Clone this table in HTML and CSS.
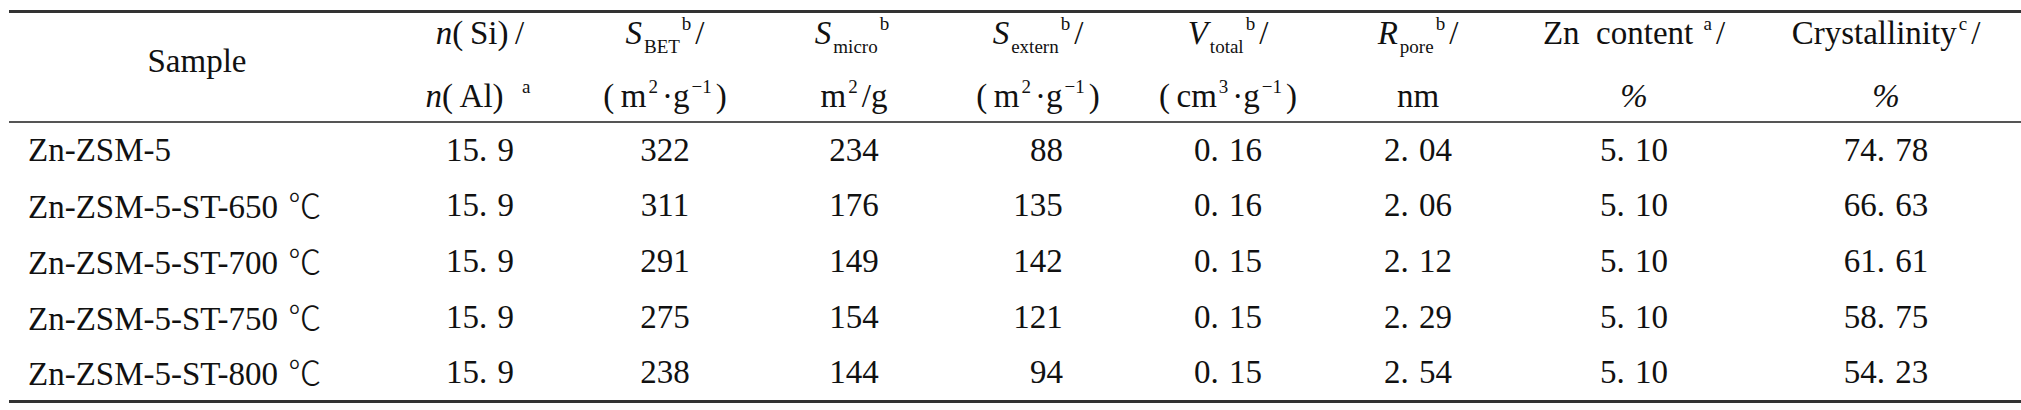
FILE: index.html
```html
<!DOCTYPE html>
<html lang="en">
<head>
    <meta charset="UTF-8">
    <title>Zn-ZSM-5 textural properties</title>
    <link rel="stylesheet" href="styles.css">
</head>
<body>
    <table class="props">
        <colgroup>
            <col class="col_sample">
            <col class="col_ratio">
            <col class="col_bet">
            <col class="col_micro">
            <col class="col_extern">
            <col class="col_total">
            <col class="col_pore">
            <col class="col_zn">
            <col class="col_cryst">
        </colgroup>
        <thead>
            <tr class="head_top">
                <th rowspan="2" class="sample_head">Sample</th>
                <th><i>n</i>(&thinsp;Si)&thinsp;/</th>
                <th><i>S</i><sub>BET</sub><sup>b</sup>/</th>
                <th><i>S</i><sub>micro</sub><sup>b</sup></th>
                <th><i>S</i><sub>extern</sub><sup>b</sup>/</th>
                <th><i>V</i><sub>total</sub><sup>b</sup>/</th>
                <th><i>R</i><sub>pore</sub><sup>b</sup>/</th>
                <th>Zn&nbsp; content <sup>a</sup>/</th>
                <th>Crystallinity<sup>c</sup>/</th>
            </tr>
            <tr class="head_unit">
                <th><i>n</i>(&thinsp;Al)&ensp;<sup>a</sup></th>
                <th>(&thinsp;m<sup>2</sup>&middot;g<sup>&minus;1</sup>)</th>
                <th>m<sup>2</sup>/g</th>
                <th>(&thinsp;m<sup>2</sup>&middot;g<sup>&minus;1</sup>)</th>
                <th>(&thinsp;cm<sup>3</sup>&middot;g<sup>&minus;1</sup>)</th>
                <th>nm</th>
                <th><i>%</i></th>
                <th><i>%</i></th>
            </tr>
        </thead>
        <tbody>
            <tr>
                <td>Zn-ZSM-5</td>
                <td>15. 9</td>
                <td>322</td>
                <td>234</td>
                <td><span class="short">88</span></td>
                <td>0. 16</td>
                <td>2. 04</td>
                <td>5. 10</td>
                <td>74. 78</td>
            </tr>
            <tr>
                <td>Zn-ZSM-5-ST-650 <span class="deg">℃</span></td>
                <td>15. 9</td>
                <td>311</td>
                <td>176</td>
                <td>135</td>
                <td>0. 16</td>
                <td>2. 06</td>
                <td>5. 10</td>
                <td>66. 63</td>
            </tr>
            <tr>
                <td>Zn-ZSM-5-ST-700 <span class="deg">℃</span></td>
                <td>15. 9</td>
                <td>291</td>
                <td>149</td>
                <td>142</td>
                <td>0. 15</td>
                <td>2. 12</td>
                <td>5. 10</td>
                <td>61. 61</td>
            </tr>
            <tr>
                <td>Zn-ZSM-5-ST-750 <span class="deg">℃</span></td>
                <td>15. 9</td>
                <td>275</td>
                <td>154</td>
                <td>121</td>
                <td>0. 15</td>
                <td>2. 29</td>
                <td>5. 10</td>
                <td>58. 75</td>
            </tr>
            <tr>
                <td>Zn-ZSM-5-ST-800 <span class="deg">℃</span></td>
                <td>15. 9</td>
                <td>238</td>
                <td>144</td>
                <td><span class="short">94</span></td>
                <td>0. 15</td>
                <td>2. 54</td>
                <td>5. 10</td>
                <td>54. 23</td>
            </tr>
        </tbody>
    </table>
</body>
</html>
```

FILE: styles.css
```css
*{
    box-sizing: border-box;
    margin: 0;
    padding: 0;
}

body{
    background-color: #fff;
    color: #111;
    font-family: "Liberation Serif", serif;
    font-size: 33px;
}

.props{
    border-collapse: collapse;
    table-layout: fixed;
    width: 2012px;
    margin: 10px 0 0 9px;
    font-family: "Liberation Serif", serif;
}

.col_sample{ width: 376px; }
.col_ratio{ width: 190px; }
.col_bet{ width: 180px; }
.col_micro{ width: 198px; }
.col_extern{ width: 170px; }
.col_total{ width: 210px; }
.col_pore{ width: 170px; }
.col_zn{ width: 262px; }
.col_cryst{ width: 256px; }

.props thead{
    border-top: 3px solid #333;
    border-bottom: 2px solid #555;
}

.props tbody{
    border-bottom: 3px solid #333;
}

.props th{
    font-weight: normal;
    text-align: center;
    white-space: nowrap;
    line-height: 1;
}

.props .head_top th{
    height: 52px;
    padding-bottom: 10px;
}

.props .head_unit th{
    height: 58px;
    padding-top: 8px;
}

.props .sample_head{
    padding: 0;
}

.props th:last-child,
.props td:last-child{
    padding-right: 14px;
}

.props sub{
    font-size: 19px;
    vertical-align: -9px;
    line-height: 0;
    padding-left: 2px;
}

.props sup{
    font-size: 19px;
    vertical-align: 14px;
    line-height: 0;
    padding: 0 4px 0 2px;
}

.props td{
    height: 56px;
    text-align: center;
    white-space: nowrap;
    line-height: 1;
    word-spacing: 2px;
}

.props td:first-child{
    text-align: left;
    padding-left: 19px;
}

.props .short{
    padding-left: 17px;
}

.props .deg{
    font-family: "Noto Sans CJK SC", sans-serif;
    font-weight: 300;
}
```
